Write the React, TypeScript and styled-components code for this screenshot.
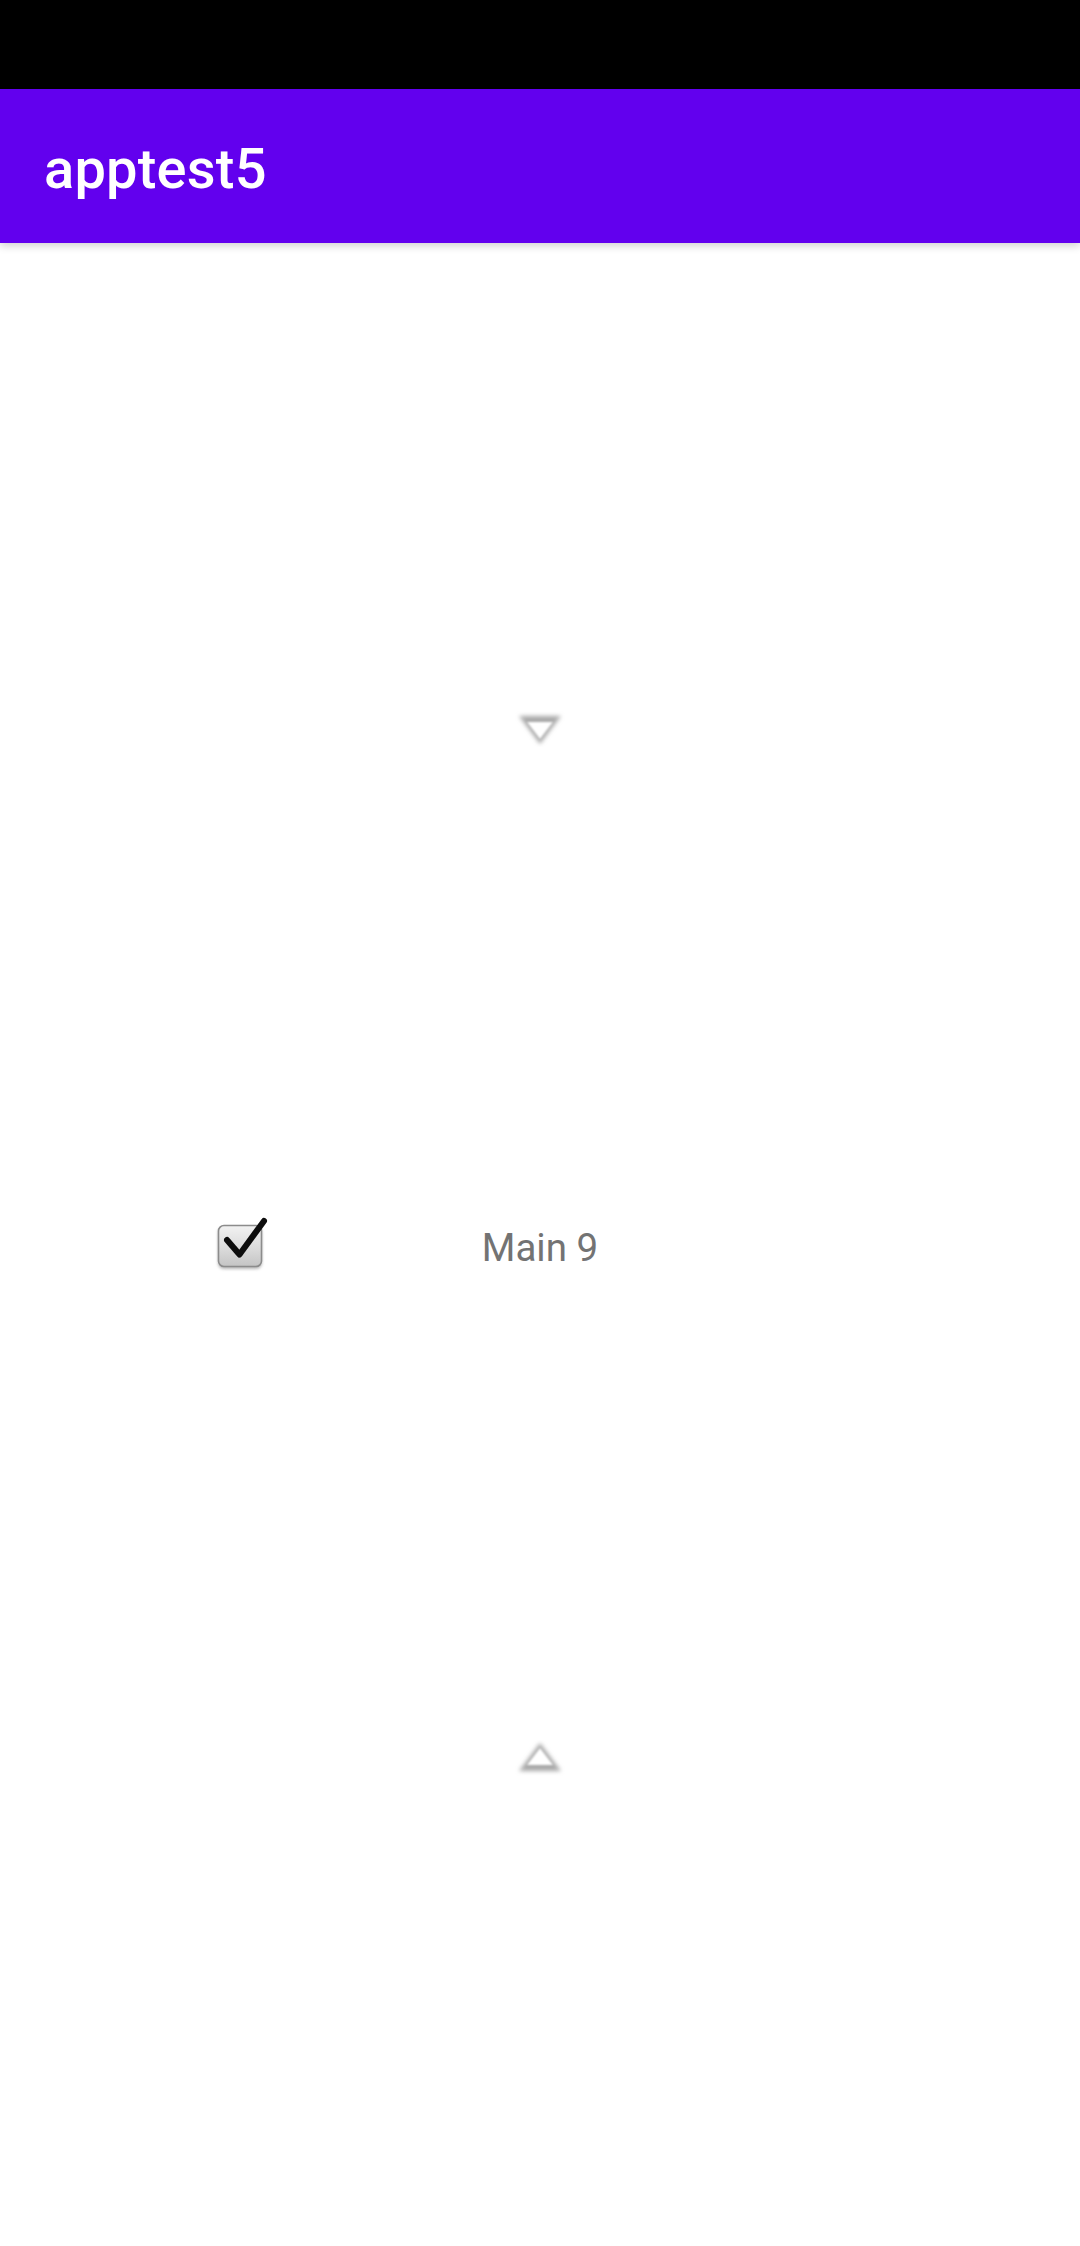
import React from "react";
import styled, { createGlobalStyle } from "styled-components";

const GlobalStyle = createGlobalStyle`
  html, body {
    margin: 0;
    padding: 0;
    background: #ffffff;
  }
  body {
    font-family: Roboto, "Noto Sans", "Liberation Sans", sans-serif;
  }
`;

const Screen = styled.div`
  width: 1080px;
  height: 2246px;
  display: flex;
  flex-direction: column;
  background: #ffffff;
  overflow: hidden;
`;

const StatusBar = styled.div`
  height: 89px;
  flex: none;
  background: #000000;
`;

const AppBar = styled.header`
  height: 154px;
  flex: none;
  display: flex;
  align-items: center;
  padding: 5px 0 0 44px;
  box-sizing: border-box;
  background: #6200ee;
  box-shadow: 0 3px 8px rgba(0, 0, 0, 0.18);
  position: relative;
  z-index: 1;
`;

const Title = styled.h1`
  margin: 0;
  font-family: Roboto, "Noto Sans", sans-serif;
  font-weight: 500;
  font-size: 56px;
  color: #ffffff;
  letter-spacing: 0.2px;
`;

const Content = styled.main`
  flex: 1;
  display: flex;
  flex-direction: column;
  align-items: center;
  padding-top: 468px;
`;

const ArrowIcon = styled.svg<{ $gap: number }>`
  display: block;
  width: 52px;
  height: 36px;
  flex: none;
  margin-top: ${(p) => p.$gap}px;
`;

const Row = styled.div`
  width: 100%;
  height: 60px;
  margin-top: 468px;
  display: grid;
  grid-template-columns: 1fr auto 1fr;
  align-items: center;
`;

const CheckCell = styled.div`
  padding-left: 214px;
  display: flex;
  align-items: center;
`;

const CheckIcon = styled.svg`
  display: block;
  width: 54px;
  height: 58px;
`;

const Label = styled.span`
  font-family: Roboto, "Noto Sans", sans-serif;
  font-size: 38.5px;
  color: #737373;
  padding-top: 4px;
`;

const Arrow: React.FC<{ dir: "down" | "up"; gap: number }> = ({ dir, gap }) => {
  const id = `blur-${dir}`;
  const outer = dir === "down" ? "5,5 47,5 26,33" : "26,3 47,31 5,31";
  const inner = dir === "down" ? "13,11 39,11 26,28" : "26,8 39,25 13,25";
  return (
    <ArrowIcon $gap={gap} viewBox="0 0 52 36">
      <defs>
        <filter id={id} x="-30%" y="-30%" width="160%" height="160%">
          <feGaussianBlur stdDeviation="2" />
        </filter>
        <filter id={`${id}-in`} x="-30%" y="-30%" width="160%" height="160%">
          <feGaussianBlur stdDeviation="1" />
        </filter>
      </defs>
      <polygon points={outer} fill="#a8a8a8" strokeLinejoin="round" filter={`url(#${id})`} />
      <polygon points={inner} fill="#ffffff" filter={`url(#${id}-in)`} />
    </ArrowIcon>
  );
};

const CheckBox: React.FC = () => (
  <CheckIcon viewBox="0 0 54 58">
    <defs>
      <linearGradient id="boxFill" x1="0" y1="0" x2="0" y2="1">
        <stop offset="0" stopColor="#f2f2f2" />
        <stop offset="0.6" stopColor="#d9d9d9" />
        <stop offset="1" stopColor="#c4c4c4" />
      </linearGradient>
      <filter id="boxShadow" x="-20%" y="-20%" width="140%" height="150%">
        <feGaussianBlur stdDeviation="1.5" />
      </filter>
      <filter id="soft" x="-10%" y="-10%" width="120%" height="120%">
        <feGaussianBlur stdDeviation="0.6" />
      </filter>
    </defs>
    <rect x="4" y="11" width="44" height="42" rx="6" fill="#7a7a7a" opacity="0.55" filter="url(#boxShadow)" />
    <rect x="4.5" y="9.5" width="43" height="41" rx="5.5" fill="url(#boxFill)" stroke="#8c8c8c" strokeWidth="1.6" />
    <path
      d="M13 24 L25.5 38.5 L50 5"
      fill="none"
      stroke="#0b0b0b"
      strokeWidth="6"
      strokeLinecap="round"
      strokeLinejoin="round"
      filter="url(#soft)"
    />
  </CheckIcon>
);

export default function App() {
  return (
    <>
      <GlobalStyle />
      <Screen>
        <StatusBar />
        <AppBar>
          <Title>apptest5</Title>
        </AppBar>
        <Content>
          <Arrow dir="down" gap={0} />
          <Row>
            <CheckCell>
              <CheckBox />
            </CheckCell>
            <Label>Main 9</Label>
            <div />
          </Row>
          <Arrow dir="up" gap={465} />
        </Content>
      </Screen>
    </>
  );
}
